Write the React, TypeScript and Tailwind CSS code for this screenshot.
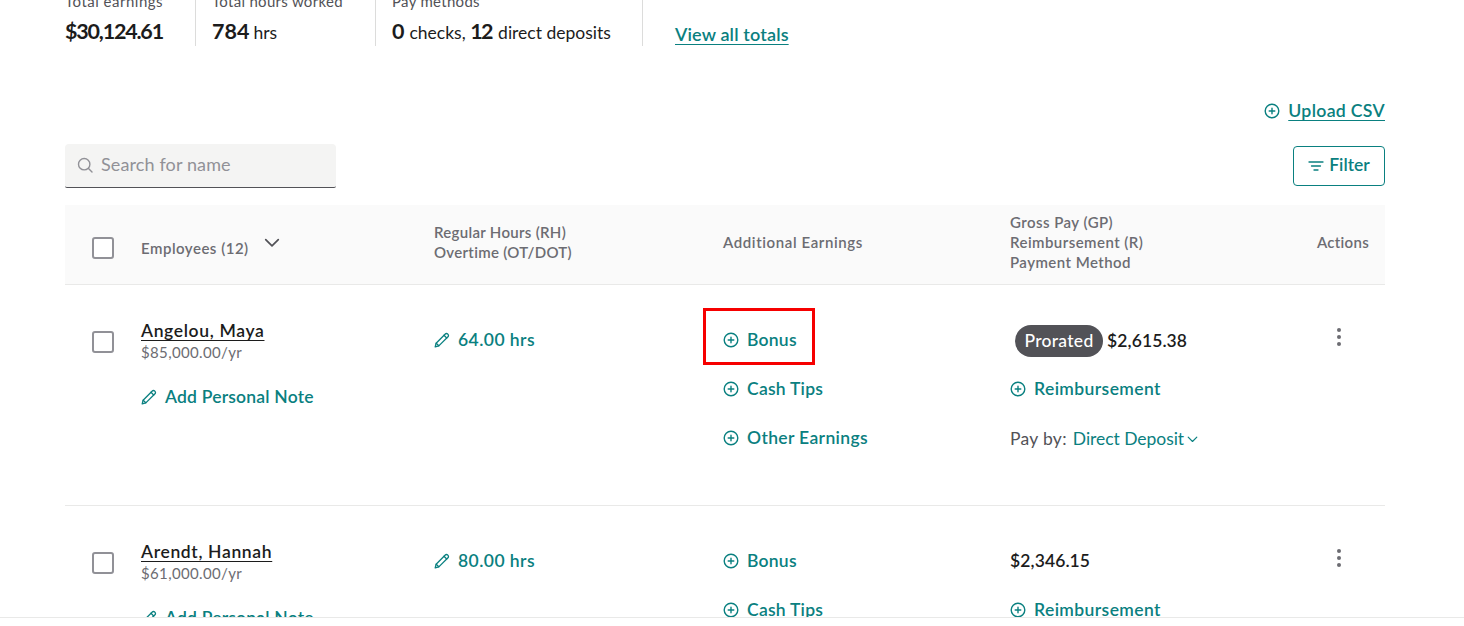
import React from "react";

const TEAL = "text-[#0a8080]";

function PlusCircle() {
  return (
    <svg width="16" height="16" viewBox="0 0 16 16" fill="none" stroke="currentColor" strokeWidth="1.4" strokeLinecap="round" className="shrink-0">
      <circle cx="8" cy="8" r="6.8" />
      <path d="M8 5.2v5.6M5.2 8h5.6" />
    </svg>
  );
}

function Pencil() {
  return (
    <svg width="16" height="16" viewBox="0 0 16 16" fill="none" stroke="currentColor" strokeWidth="1.3" strokeLinejoin="round" strokeLinecap="round" className="shrink-0">
      <path d="M1.2 14.8l.9-3.6L11.3 2a1.6 1.6 0 0 1 2.3 0l.4.4a1.6 1.6 0 0 1 0 2.3L4.8 13.9l-3.6.9z" />
      <path d="M10 3.3l2.7 2.7M2.2 11.2l2.6 2.6" />
    </svg>
  );
}

function Chevron({ size = 14, width = 1.6 }: { size?: number; width?: number }) {
  return (
    <svg width={size} height={size} viewBox="0 0 14 14" fill="none" stroke="currentColor" strokeWidth={width} strokeLinecap="round" strokeLinejoin="round" className="shrink-0">
      <path d="M1.5 4l5.5 5.5L12.5 4" />
    </svg>
  );
}

function Box() {
  return <div className="h-[22px] w-[22px] rounded-[3px] border-2 border-[#919197] bg-white" />;
}

function TealLink({ icon, children }: { icon: React.ReactNode; children: React.ReactNode }) {
  return (
    <div className={`flex h-[24px] items-center gap-[8px] text-[17.5px] font-semibold tracking-[0.25px] ${TEAL}`}>
      {icon}
      <span>{children}</span>
    </div>
  );
}

function Row({
  name,
  salary,
  hours,
  pay,
  prorated,
  marked,
}: {
  name: string;
  salary: string;
  hours: string;
  pay: string;
  prorated?: boolean;
  marked?: boolean;
}) {
  return (
    <div className="grid h-[221px] shrink-0 grid-cols-[76px_293px_289px_287px_250px_1fr] border-b border-[#e9e9e8]">
      <div className="pl-[27px] pt-[46px]">
        <Box />
      </div>
      <div className="pt-[34px]">
        <div className="h-[24px] text-[17.5px] font-semibold leading-[24px] tracking-[0.65px] text-[#1c1c1c] underline underline-offset-[3px]">
          {name}
        </div>
        <div className="-mt-[1px] h-[20px] text-[15px] leading-[20px] tracking-[0.35px] text-[#6c6c72]">{salary}</div>
        <div className="mt-[23px]">
          <TealLink icon={<Pencil />}>
            <span className="tracking-[0.2px]">Add Personal Note</span>
          </TealLink>
        </div>
      </div>
      <div className="pt-[43px]">
        <TealLink icon={<Pencil />}>
          <span className="tracking-[0.45px]">{hours}</span>
        </TealLink>
      </div>
      <div className="flex flex-col gap-[25px] pt-[43px]">
        <div className="relative">
          <TealLink icon={<PlusCircle />}>Bonus</TealLink>
          {marked && (
            <div className="absolute left-[-20px] top-[-20px] h-[57px] w-[112px] border-[3px] border-[#f60000]" />
          )}
        </div>
        <TealLink icon={<PlusCircle />}>Cash Tips</TealLink>
        <TealLink icon={<PlusCircle />}>
          <span className="tracking-[0.35px]">Other Earnings</span>
        </TealLink>
      </div>
      <div className={prorated ? "pt-[42px]" : "pt-[41px]"}>
        <div className="flex h-[28px] items-center">
          {prorated && (
            <span className="ml-[5px] mr-[4px] flex h-[32px] w-[88px] items-center justify-center rounded-full bg-[#525257] text-[17.5px] font-medium tracking-[0.3px] text-white">
              Prorated
            </span>
          )}
          <span className="text-[17.5px] font-semibold tracking-[0.1px] text-[#1c1c1c]">{pay}</span>
        </div>
        <div className={prorated ? "mt-[22px]" : "mt-[23px]"}>
          <TealLink icon={<PlusCircle />}>
            <span className="tracking-[0.4px]">Reimbursement</span>
          </TealLink>
        </div>
        <div className="mt-[26px] flex h-[24px] items-center text-[17.5px]">
          <span className="tracking-[0.3px] text-[#525257]">Pay by:</span>
          <span className={`ml-[6px] tracking-[-0.05px] ${TEAL}`}>Direct Deposit</span>
          <span className={`ml-[3px] ${TEAL}`}>
            <Chevron size={11} width={1.5} />
          </span>
        </div>
      </div>
      <div className="flex justify-end pr-[44px] pt-[43px]">
        <div className="flex h-[18px] w-[4px] flex-col justify-between">
          <span className="h-[4px] w-[4px] rounded-full bg-[#6c6c72]" />
          <span className="h-[4px] w-[4px] rounded-full bg-[#6c6c72]" />
          <span className="h-[4px] w-[4px] rounded-full bg-[#6c6c72]" />
        </div>
      </div>
    </div>
  );
}

export default function App() {
  return (
    <div className="flex h-[626px] w-[1464px] flex-col overflow-hidden bg-white font-['Lato',sans-serif]">
      <main className="min-h-0 flex-1 overflow-hidden">
        <div className="ml-[65px] w-[1320px]">
          <div className="-mt-[11px] flex h-[57px]">
            <div className="w-[130px]">
              <div className="h-[24px] text-[15px] leading-[24px] tracking-[0.5px] text-[#525257]">Total earnings</div>
              <div className="mt-[5px] text-[21.5px] font-bold leading-[26px] tracking-[-1.2px] text-[#1c1c1c]">$30,124.61</div>
            </div>
            <div className="w-[180px] border-l border-[#dcdcdb] pl-[16px]">
              <div className="h-[24px] text-[15px] leading-[24px] tracking-[0.3px] text-[#525257]">Total hours worked</div>
              <div className="mt-[5px] leading-[26px] text-[#1c1c1c]">
                <span className="text-[21.5px] font-bold">784</span>
                <span className="ml-[4px] text-[17.5px]">hrs</span>
              </div>
            </div>
            <div className="w-[267px] border-l border-[#dcdcdb] pl-[16px]">
              <div className="h-[24px] text-[15px] leading-[24px] tracking-[0.3px] text-[#525257]">Pay methods</div>
              <div className="mt-[5px] leading-[26px] text-[#1c1c1c]">
                <span className="text-[21.5px] font-bold">0</span>
                <span className="ml-[5px] text-[17.5px]">checks, </span>
                <span className="text-[21.5px] font-bold tracking-[-1.5px]">12</span>
                <span className="ml-[6px] text-[17.5px]">direct deposits</span>
              </div>
            </div>
            <div className="border-l border-[#dcdcdb] pl-[32px] pt-[32px]">
              <span className={`text-[18px] font-semibold tracking-[0.15px] underline underline-offset-[3px] ${TEAL}`}>
                View all totals
              </span>
            </div>
          </div>

          <div className={`flex h-[77px] items-center justify-end gap-[8px] pt-[53px] ${TEAL}`}>
            <PlusCircle />
            <span className="text-[17.7px] font-semibold tracking-[0.3px] underline underline-offset-[3px]">Upload CSV</span>
          </div>

          <div className="mt-[21px] flex h-[44px] items-center justify-between">
            <div className="flex h-[44px] w-[271px] items-center gap-[8px] rounded-t-[4px] rounded-b-[2px] border-b border-[#525257] bg-[#f4f4f3] pb-[2px] pl-[12px] text-[#919197]">
              <svg width="16" height="16" viewBox="0 0 16 16" fill="none" stroke="currentColor" strokeWidth="1.4" strokeLinecap="round" className="shrink-0">
                <circle cx="7.2" cy="7.2" r="5.7" />
                <path d="M11.5 11.5L15 15" />
              </svg>
              <span className="text-[18px] tracking-[0.12px]">Search for name</span>
            </div>
            <button className={`flex h-[40px] w-[92px] items-center justify-center gap-[5px] rounded-[4px] border border-[#0a8080] pb-[2px] text-[17.5px] font-semibold ${TEAL}`}>
              <svg width="16" height="12" viewBox="0 0 16 12" fill="none" stroke="currentColor" strokeWidth="1.3" strokeLinecap="round" className="mt-[2px] shrink-0">
                <path d="M1 2h14M3.5 6h9M6 10h4" />
              </svg>
              Filter
            </button>
          </div>

          <div className="mt-[17px] grid h-[80px] grid-cols-[76px_293px_289px_287px_250px_1fr] border-b border-[#e9e9e8] bg-[#fafafa] text-[15px] font-semibold leading-[20px] text-[#6c6c72]">
            <div className="pl-[27px] pt-[32px]">
              <Box />
            </div>
            <div className="flex items-start gap-[15px] pt-[33px]">
              <span className="tracking-[0.5px]">Employees (12)</span>
              <span className="-mt-[3px] text-[#525257]">
                <Chevron size={16} width={1.5} />
              </span>
            </div>
            <div className="pt-[17px] tracking-[0.3px]">
              <div>Regular Hours (RH)</div>
              <div>Overtime (OT/DOT)</div>
            </div>
            <div className="pt-[27px] tracking-[0.6px]">Additional Earnings</div>
            <div className="pt-[7px] tracking-[0.45px]">
              <div>Gross Pay (GP)</div>
              <div>Reimbursement (R)</div>
              <div>Payment Method</div>
            </div>
            <div className="pr-[16px] pt-[27px] text-right tracking-[0.3px]">Actions</div>
          </div>

          <Row name="Angelou, Maya" salary="$85,000.00/yr" hours="64.00 hrs" pay="$2,615.38" prorated marked />
          <Row name="Arendt, Hannah" salary="$61,000.00/yr" hours="80.00 hrs" pay="$2,346.15" />
        </div>
      </main>
      <footer className="h-[9px] shrink-0 border-t border-[#e9e9e8] bg-white" />
    </div>
  );
}
